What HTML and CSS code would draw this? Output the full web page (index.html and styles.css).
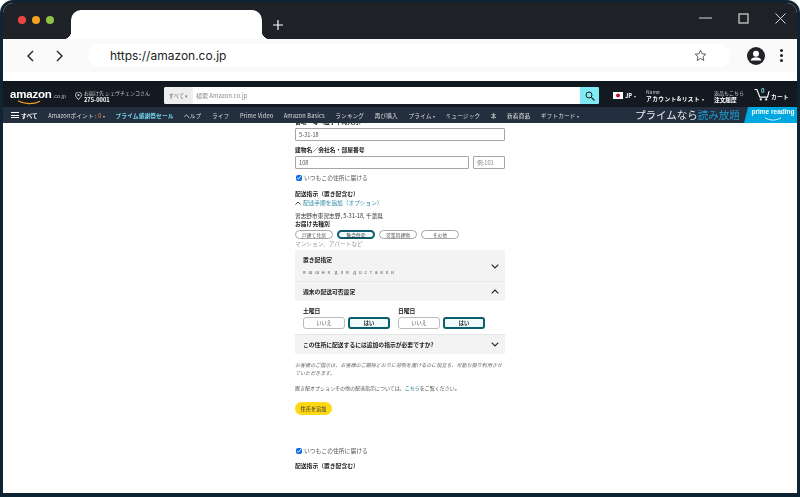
FILE: index.html
```html
<!DOCTYPE html>
<html lang="ja">
<head>
    <meta charset="UTF-8">
    <meta name="viewport" content="width=device-width, initial-scale=1.0">
    <title>Amazon.co.jp - 住所を追加</title>
    <link rel="stylesheet" href="styles.css">
</head>
<body>
    <div class="window">
        <div class="tabbar">
            <div class="lights">
                <span class="light red"></span>
                <span class="light amber"></span>
                <span class="light green"></span>
            </div>
            <div class="tab"></div>
            <svg class="new-tab" width="10" height="10" viewBox="0 0 10 10"><path d="M5 0v10M0 5h10" stroke="#fff" stroke-width="1.2"/></svg>
            <div class="window-btns">
                <svg width="13" height="14" viewBox="0 0 13 14"><path d="M0 7h13" stroke="#d8d8d8" stroke-width="1"/></svg>
                <svg width="11" height="11" viewBox="0 0 11 11"><rect x="1" y="1" width="9" height="9" fill="none" stroke="#d8d8d8" stroke-width="1.2"/></svg>
                <svg width="11" height="11" viewBox="0 0 11 11"><path d="M.5.5l10 10M10.5.5l-10 10" stroke="#d8d8d8" stroke-width="1"/></svg>
            </div>
        </div>

        <div class="toolbar">
            <svg class="arrow" width="8" height="12" viewBox="0 0 8 12"><path d="M7 1L2 6l5 5" fill="none" stroke="#222" stroke-width="1.4"/></svg>
            <svg class="arrow" width="8" height="12" viewBox="0 0 8 12"><path d="M1 1l5 5-5 5" fill="none" stroke="#222" stroke-width="1.4"/></svg>
            <div class="urlbar">
                <span class="url">https://amazon.co.jp</span>
                <svg width="13" height="13" viewBox="0 0 24 24"><path d="M12 2.5l2.9 6.3 6.9.8-5.1 4.7 1.4 6.8-6.1-3.4-6.1 3.4 1.4-6.8-5.1-4.7 6.9-.8z" fill="none" stroke="#444" stroke-width="1.6"/></svg>
            </div>
            <svg class="avatar" width="18" height="18" viewBox="0 0 18 18">
                <circle cx="9" cy="9" r="9" fill="#212328"/>
                <circle cx="9" cy="6.8" r="3" fill="#fff"/>
                <path d="M3.6 13.6c.6-2.4 2.8-3.3 5.4-3.3s4.8.9 5.4 3.3z" fill="#fff"/>
            </svg>
            <div class="kebab"><i></i><i></i><i></i></div>
        </div>

        <header class="az-top">
            <div class="logo">
                <span class="logo-word">amazon</span><span class="logo-tld">.co.jp</span>
                <svg class="smile" width="24" height="5" viewBox="0 0 24 5"><path d="M1 .8c6 3.6 15 4 22 .4" fill="none" stroke="#f39a1f" stroke-width="1.2"/></svg>
            </div>
            <div class="deliver">
                <svg width="7" height="8" viewBox="0 0 7 8"><path d="M3.5 7.6L1 4.6a3 3 0 1 1 5 0z" fill="none" stroke="#ddd" stroke-width=".9"/><circle cx="3.5" cy="3" r="1" fill="#ddd"/></svg>
                <div class="two-line">
                    <span class="small">お届け先 シェヴチェンコさん</span>
                    <b>275-0001</b>
                </div>
            </div>
            <div class="search">
                <span class="search-cat">すべて ▾</span>
                <span class="search-box">検索 Amazon.co.jp</span>
                <span class="search-btn">
                    <svg width="10" height="10" viewBox="0 0 10 10"><circle cx="4" cy="4" r="3" fill="none" stroke="#222" stroke-width="1"/><path d="M6.3 6.3L9.5 9.5" stroke="#222" stroke-width="1.2"/></svg>
                </span>
            </div>
            <div class="lang">
                <svg width="10" height="7" viewBox="0 0 10 7"><rect width="10" height="7" fill="#fff"/><circle cx="5" cy="3.5" r="2" fill="#c4122f"/></svg>
                <b>JP</b><span class="caret">▾</span>
            </div>
            <div class="two-line account">
                <span class="small">Name</span>
                <b>アカウント&amp;リスト <span class="caret">▾</span></b>
            </div>
            <div class="two-line orders">
                <span class="small">返品もこちら</span>
                <b>注文履歴</b>
            </div>
            <div class="cart">
                <svg width="16" height="13" viewBox="0 0 16 13"><path d="M.5 1.5h2.4l3 7.6h7.6l1.6-6" fill="none" stroke="#fff" stroke-width="1.1"/><circle cx="6.8" cy="11.4" r="1.1" fill="#fff"/><circle cx="12.2" cy="11.4" r="1.1" fill="#fff"/></svg>
                <span class="cart-count">0</span>
                <b>カート</b>
            </div>
        </header>

        <nav class="az-nav">
            <div class="nav-links">
                <a class="nav-all"><span class="burger"><i></i><i></i><i></i></span>すべて</a>
                <a>Amazonポイント : <em>0</em> <span class="caret">▾</span></a>
                <a class="nav-sale">プライム感謝祭セール</a>
                <a>ヘルプ</a>
                <a>ライフ</a>
                <a>Prime Video</a>
                <a>Amazon Basics</a>
                <a>ランキング</a>
                <a>再び購入</a>
                <a>プライム <span class="caret">▾</span></a>
                <a>ミュージック</a>
                <a>本</a>
                <a>新着商品</a>
                <a>ギフトカード <span class="caret">▾</span></a>
            </div>
            <div class="promo">プライムなら<span>読み放題</span></div>
            <div class="reading">
                <span>prime reading</span>
                <svg width="18" height="4" viewBox="0 0 18 4"><path d="M1 .8c5 3 11 3 16 0" fill="none" stroke="#fff" stroke-width=".8"/></svg>
            </div>
        </nav>

        <main class="page">
            <form class="address-form">
                <label class="field-label first">番地・号（数字半角入力）</label>
                <input class="text-input" type="text" value="5-31-18">

                <label class="field-label second">建物名／会社名・部屋番号</label>
                <div class="input-row">
                    <input class="text-input grow" type="text" value="108">
                    <input class="text-input room" type="text" placeholder="例:101">
                </div>

                <label class="check-row">
                    <input type="checkbox" checked>
                    <span>いつもこの住所に届ける</span>
                </label>

                <p class="field-label instr">配送指示（置き配含む）</p>
                <p class="toggle-row">
                    <svg width="6" height="4" viewBox="0 0 6 4"><path d="M.5 3.5L3 1l2.5 2.5" fill="none" stroke="#222" stroke-width=".9"/></svg>
                    <a>配達手順を追加（オプション）</a>
                </p>
                <p class="addr-line">習志野市東習志野, 5-31-18, 千葉県</p>
                <p class="field-label type">お届け先種別</p>
                <div class="chips">
                    <span class="chip">戸建て住居</span>
                    <span class="chip on">集合住宅</span>
                    <span class="chip">営業用建物</span>
                    <span class="chip">その他</span>
                </div>
                <p class="hint">マンション、アパートなど</p>

                <section class="accordion">
                    <div class="acc-head tall">
                        <div>
                            <h3>置き配指定</h3>
                            <p class="acc-sub">я ш ш н к &nbsp;д л я &nbsp;д о с т а в к и</p>
                        </div>
                        <svg class="chev" width="8" height="5" viewBox="0 0 8 5"><path d="M.7.7L4 4l3.3-3.3" fill="none" stroke="#222" stroke-width="1.1"/></svg>
                    </div>
                    <div class="acc-head">
                        <h3>週末の配送可否設定</h3>
                        <svg class="chev" width="8" height="5" viewBox="0 0 8 5"><path d="M.7 4.3L4 1l3.3 3.3" fill="none" stroke="#222" stroke-width="1.1"/></svg>
                    </div>
                    <div class="acc-body">
                        <div class="day">
                            <h4>土曜日</h4>
                            <div class="yes-no">
                                <span class="pick">いいえ</span>
                                <span class="pick on">はい</span>
                            </div>
                        </div>
                        <div class="day">
                            <h4>日曜日</h4>
                            <div class="yes-no">
                                <span class="pick">いいえ</span>
                                <span class="pick on">はい</span>
                            </div>
                        </div>
                    </div>
                    <div class="acc-head">
                        <h3>この住所に配送するには追加の指示が必要ですか?</h3>
                        <svg class="chev" width="8" height="5" viewBox="0 0 8 5"><path d="M.7.7L4 4l3.3-3.3" fill="none" stroke="#222" stroke-width="1.1"/></svg>
                    </div>
                </section>

                <p class="note">お客様のご指示は、お客様のご期待どおりに荷物を届けるのに役立ち、可能な限り利用させていただきます。</p>
                <p class="more">置き配オプションその他の配送指示については、<a>こちら</a>をご覧ください。</p>
                <button class="add-btn" type="button">住所を追加</button>

                <label class="check-row lower">
                    <input type="checkbox" checked>
                    <span>いつもこの住所に届ける</span>
                </label>
                <p class="field-label cut">配送指示（置き配含む）</p>
            </form>
        </main>
        <div class="bottom-edge"></div>
    </div>
</body>
</html>
```

FILE: styles.css
```css
* {
    box-sizing: border-box;
}
html, body {
    margin: 0;
    height: 100%;
    background-color: #fff;
    overflow: hidden;
}
body {
    font-family: "Noto Sans CJK JP", "Liberation Sans", sans-serif;
    color: #222;
}
p, h3, h4 {
    margin: 0;
}
.window {
    width: 800px;
    height: 497px;
    display: flex;
    flex-direction: column;
    border: solid #0e2432;
    border-width: 3px 3px 0 3px;
    border-radius: 13px 13px 0 0;
    overflow: hidden;
    background-color: #fff;
}

/* browser chrome */
.tabbar {
    height: 36px;
    flex: none;
    display: flex;
    align-items: flex-end;
    background-color: #1e2126;
}
.lights {
    display: flex;
    gap: 6px;
    margin: 0 0 15px 15px;
}
.light {
    width: 8px;
    height: 8px;
    border-radius: 50%;
}
.red { background-color: #ee4444; }
.amber { background-color: #f4a31e; }
.green { background-color: #8fc445; }
.tab {
    position: relative;
    width: 191px;
    height: 29px;
    margin-left: 17px;
    background-color: #fff;
    border-radius: 10px 10px 0 0;
}
.tab::before, .tab::after {
    content: "";
    position: absolute;
    bottom: 0;
    width: 8px;
    height: 8px;
    background: radial-gradient(circle at 0 0, #1e2126 8px, #fff 8.5px);
}
.tab::before {
    left: -8px;
}
.tab::after {
    right: -8px;
    background: radial-gradient(circle at 100% 0, #1e2126 8px, #fff 8.5px);
}
.new-tab {
    margin: 0 0 9px 11px;
}
.window-btns {
    margin: 0 11px 14px auto;
    display: flex;
    align-items: center;
    gap: 26px;
}
.toolbar {
    height: 42px;
    flex: none;
    display: flex;
    align-items: center;
    background-color: #fafafa;
    border-bottom: 9px solid #fff;
    padding: 0 12px 0 23px;
}
.toolbar > * {
    flex: none;
}
.toolbar .arrow + .arrow {
    margin-left: 22px;
}
.urlbar {
    width: 642px;
    height: 23px;
    margin-left: 24px;
    padding: 0 23px 0 22px;
    display: flex;
    align-items: center;
    justify-content: space-between;
    background-color: #fff;
    border-radius: 12px;
}
.url {
    font-family: "Inter", sans-serif;
    font-size: 12px;
    color: #222;
}
.avatar {
    margin-left: 17px;
}
.kebab {
    margin-left: 15px;
    display: flex;
    flex-direction: column;
    gap: 2px;
}
.kebab i {
    width: 3px;
    height: 3px;
    border-radius: 50%;
    background-color: #222;
}

/* amazon header */
.az-top {
    height: 26px;
    flex: none;
    display: flex;
    align-items: center;
    padding: 0 0 0 7px;
    background-color: #131921;
    border-top: 3px solid #10171f;
    color: #fff;
    font-size: 5.7px;
    filter: blur(.3px);
}
.az-top > * {
    flex: none;
}
.logo {
    position: relative;
    width: 60px;
    white-space: nowrap;
    margin-top: -3px;
}
.logo-word {
    font-family: "Liberation Sans", sans-serif;
    font-size: 11.5px;
    font-weight: 700;
    letter-spacing: -.2px;
}
.logo-tld {
    font-family: "Liberation Sans", sans-serif;
    font-size: 5.5px;
    margin-left: 1px;
    color: #bbb;
}
.smile {
    position: absolute;
    left: 7px;
    top: 12px;
}
.deliver {
    display: flex;
    align-items: center;
    gap: 2px;
    width: 89px;
    margin-left: 5px;
}
.two-line {
    display: flex;
    flex-direction: column;
    line-height: 7px;
    white-space: nowrap;
}
.small {
    color: #ccc;
    font-size: 5px;
}
.search {
    width: 435px;
    height: 17px;
    display: flex;
    font-size: 6px;
    background-color: #fff;
    border-radius: 2px;
    overflow: hidden;
}
.search-cat {
    width: 29px;
    display: flex;
    align-items: center;
    justify-content: center;
    background-color: #eee;
    color: #777;
    font-size: 5.4px;
}
.search-box {
    flex: 1;
    display: flex;
    align-items: center;
    padding-left: 3px;
    color: #888;
}
.search-btn {
    width: 19px;
    display: flex;
    align-items: center;
    justify-content: center;
    background-color: #80eaf5;
}
.lang {
    display: flex;
    align-items: center;
    gap: 2px;
    margin-left: 14px;
    width: 33px;
}
.caret {
    font-size: 4px;
    color: #ccc;
}
.account {
    width: 68px;
}
.account b {
    letter-spacing: .5px;
}
.orders {
    width: 40px;
}
.cart {
    position: relative;
    display: flex;
    align-items: flex-end;
    gap: 1px;
    margin-top: -3px;
    white-space: nowrap;
}
.cart b {
    letter-spacing: .3px;
}
.cart-count {
    position: absolute;
    left: 7px;
    top: 0;
    font-size: 6px;
    line-height: 6px;
    font-weight: 700;
    color: #7fd8f0;
}

/* nav strip */
.az-nav {
    height: 16px;
    flex: none;
    display: flex;
    align-items: center;
    background-color: #232f3e;
    color: #ddd;
    font-size: 5.7px;
    white-space: nowrap;
    filter: blur(.3px);
}
.nav-links {
    width: 632px;
    flex: none;
    padding-left: 8px;
    display: flex;
    align-items: center;
    gap: 10.5px;
    letter-spacing: .12px;
}
.nav-links em {
    font-style: normal;
    color: #e8843a;
}
.nav-all {
    display: flex;
    align-items: center;
    gap: 2px;
    font-weight: 700;
    color: #fff;
}
.burger {
    display: flex;
    flex-direction: column;
    gap: 1.5px;
}
.burger i {
    display: block;
    width: 8px;
    height: 1px;
    background-color: #fff;
}
.nav-sale {
    color: #74d6f2;
    font-weight: 700;
}
.promo {
    width: 109px;
    flex: none;
    font-size: 10.5px;
    line-height: 16px;
    color: #e8e8e8;
}
.promo span {
    color: #1a9ed4;
}
.reading {
    flex: 1;
    height: 100%;
    padding-left: 5px;
    display: flex;
    flex-direction: column;
    align-items: center;
    clip-path: polygon(4px 0, 100% 0, 100% 100%, 0 100%);
    background-color: #00a8e1;
    color: #fff;
    font-family: "Liberation Sans", sans-serif;
    font-size: 6.5px;
    font-weight: 700;
    line-height: 10px;
}

/* page body */
.page {
    flex: 1;
    min-height: 0;
    overflow: hidden;
    background-color: #fff;
}
.address-form {
    width: 210px;
    height: 351px;
    margin: -5px 0 0 292px;
    overflow: hidden;
    font-size: 5.7px;
    line-height: 8px;
    color: #555;
    filter: blur(.3px);
}
.field-label {
    display: block;
    font-weight: 700;
    font-size: 5.8px;
    color: #222;
}
.field-label.first {
    height: 10px;
}
.field-label.second {
    margin-top: 5px;
    height: 9px;
}
.text-input {
    display: block;
    width: 100%;
    height: 13px;
    padding: 0 3px;
    border: 1px solid #a6a6a6;
    border-radius: 1px;
    font-family: inherit;
    font-size: 5.7px;
    color: #555;
    background-color: #fff;
}
.input-row {
    display: flex;
    gap: 4px;
    margin-top: 1px;
}
.input-row .grow {
    width: 174px;
}
.input-row .room {
    width: 32px;
}
.text-input::placeholder {
    color: #888;
}
.check-row {
    display: flex;
    align-items: center;
    gap: 2px;
    margin-top: 5px;
    height: 8px;
    font-size: 5.8px;
}
.check-row input {
    width: 6px;
    height: 6px;
    margin: 0 0 0 1px;
    accent-color: #0b6ce8;
}
.instr {
    margin-top: 8px;
}
.toggle-row {
    display: flex;
    align-items: center;
    gap: 2px;
    margin-top: 1px;
}
.toggle-row a {
    color: #2a8a9c;
}
.addr-line {
    margin-top: 5px;
    color: #333;
}
.chips {
    display: flex;
    gap: 4px;
    margin-top: 2px;
}
.chip {
    width: 38px;
    height: 9px;
    display: flex;
    align-items: center;
    justify-content: center;
    border: 1px solid #a6a6a6;
    border-radius: 5px;
    font-size: 4.8px;
}
.chip.on {
    border: 2px solid #0b5d6e;
    background-color: #eefcfd;
    color: #222;
}
.hint {
    margin-top: 1px;
    color: #999;
}
.accordion {
    margin-top: 2px;
}
.acc-head {
    height: 20px;
    padding: 0 6px 0 8px;
    display: flex;
    align-items: center;
    justify-content: space-between;
    background-color: #f3f3f3;
    border-top: 1px solid #e7e7e7;
    color: #222;
}
.acc-head.tall {
    height: 31px;
    padding-top: 1px;
    border-top: none;
}
.acc-head h3 {
    font-size: 5.8px;
    font-weight: 700;
}
.acc-sub {
    margin-top: 4px;
    font-size: 4.6px;
    letter-spacing: .9px;
    color: #555;
}
.acc-body {
    height: 33px;
    padding: 6px 0 0 8px;
    display: flex;
    gap: 9px;
}
.day {
    width: 86px;
}
.day h4 {
    font-size: 5.8px;
    font-weight: 700;
    line-height: 7px;
    color: #222;
}
.yes-no {
    display: flex;
    gap: 3px;
    margin-top: 3px;
}
.pick {
    width: 42px;
    height: 12px;
    flex: none;
    display: flex;
    align-items: center;
    justify-content: center;
    border: 1px solid #bbb;
    border-radius: 3px;
    font-size: 5.2px;
}
.pick.on {
    border: 2px solid #0b5d6e;
    background-color: #eefcfd;
    color: #222;
    font-weight: 700;
}
.note {
    margin-top: 7px;
    font-size: 5px;
    font-style: italic;
    letter-spacing: .05px;
    color: #666;
}
.more {
    margin-top: 7px;
    font-size: 5px;
    color: #555;
}
.more a {
    color: #167a8e;
}
.add-btn {
    display: block;
    width: 37px;
    height: 13px;
    margin-top: 10px;
    padding: 0;
    border: none;
    border-radius: 7px;
    background-color: #ffd814;
    font-family: inherit;
    font-size: 5.2px;
    color: #333;
}
.lower {
    margin-top: 32px;
}
.cut {
    margin-top: 7px;
}
.bottom-edge {
    height: 4px;
    flex: none;
    background-color: #0e2432;
}
```
